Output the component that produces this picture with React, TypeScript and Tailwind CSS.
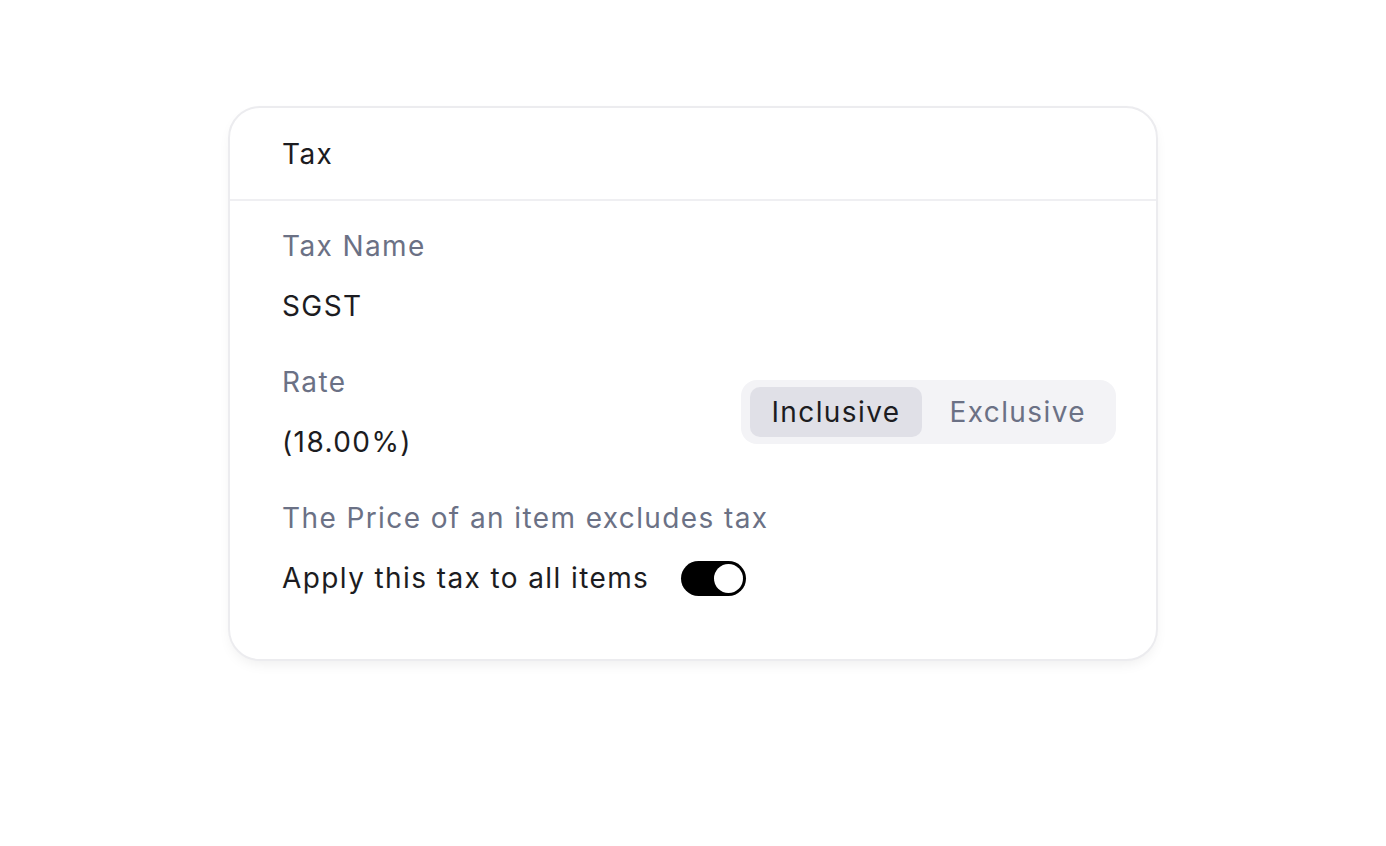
import { useState } from 'react';

export default function App() {
  const [mode, setMode] = useState<'inclusive' | 'exclusive'>('inclusive');
  const [applyAll, setApplyAll] = useState(true);

  return (
    <div className="min-h-screen bg-white pt-[106px] font-['Inter',sans-serif] text-[28px] leading-[40px] tracking-[1.4px] text-[#1c1c21]">
      <div className="mx-auto w-[930px] rounded-[32px] border-2 border-[#ececef] bg-white shadow-[0_6px_14px_-4px_rgba(0,0,0,0.08)]">
        <div className="flex h-[93px] items-center border-b-2 border-[#efeff2] pl-[52px] pr-[40px]">
          <span>Tax</span>
        </div>

        <div className="flex flex-col pb-[61px] pl-[52px] pr-[40px] pt-[25px]">
          <div className="text-[#6b7185]">Tax Name</div>
          <div className="mt-[20px]">SGST</div>

          <div className="mt-[36px] flex items-center justify-between">
            <div className="flex flex-col">
              <div className="text-[#6b7185]">Rate</div>
              <div className="mt-[20px]">(18.00%)</div>
            </div>
            <div className="flex gap-[7px] rounded-[16px] bg-[#f3f3f6] px-[9px] py-[7px]">
              <button
                onClick={() => setMode('inclusive')}
                className={`h-[50px] rounded-[10px] px-[21px] ${
                  mode === 'inclusive' ? 'bg-[#e0e0e7] text-[#1c1c21]' : 'text-[#6b7185]'
                }`}
              >
                Inclusive
              </button>
              <button
                onClick={() => setMode('exclusive')}
                className={`h-[50px] rounded-[10px] px-[21px] ${
                  mode === 'exclusive' ? 'bg-[#e0e0e7] text-[#1c1c21]' : 'text-[#6b7185]'
                }`}
              >
                Exclusive
              </button>
            </div>
          </div>

          <div className="mt-[36px] text-[#6b7185]">The Price of an item excludes tax</div>
          <div className="mt-[20px] flex items-center gap-[32px]">
            <span>Apply this tax to all items</span>
            <button
              onClick={() => setApplyAll(!applyAll)}
              className={`flex h-[35px] w-[65px] items-center rounded-full p-[3px] ${
                applyAll ? 'justify-end bg-black' : 'justify-start bg-[#d4d4d8]'
              }`}
            >
              <span className="h-[29px] w-[29px] rounded-full bg-white" />
            </button>
          </div>
        </div>
      </div>
    </div>
  );
}
